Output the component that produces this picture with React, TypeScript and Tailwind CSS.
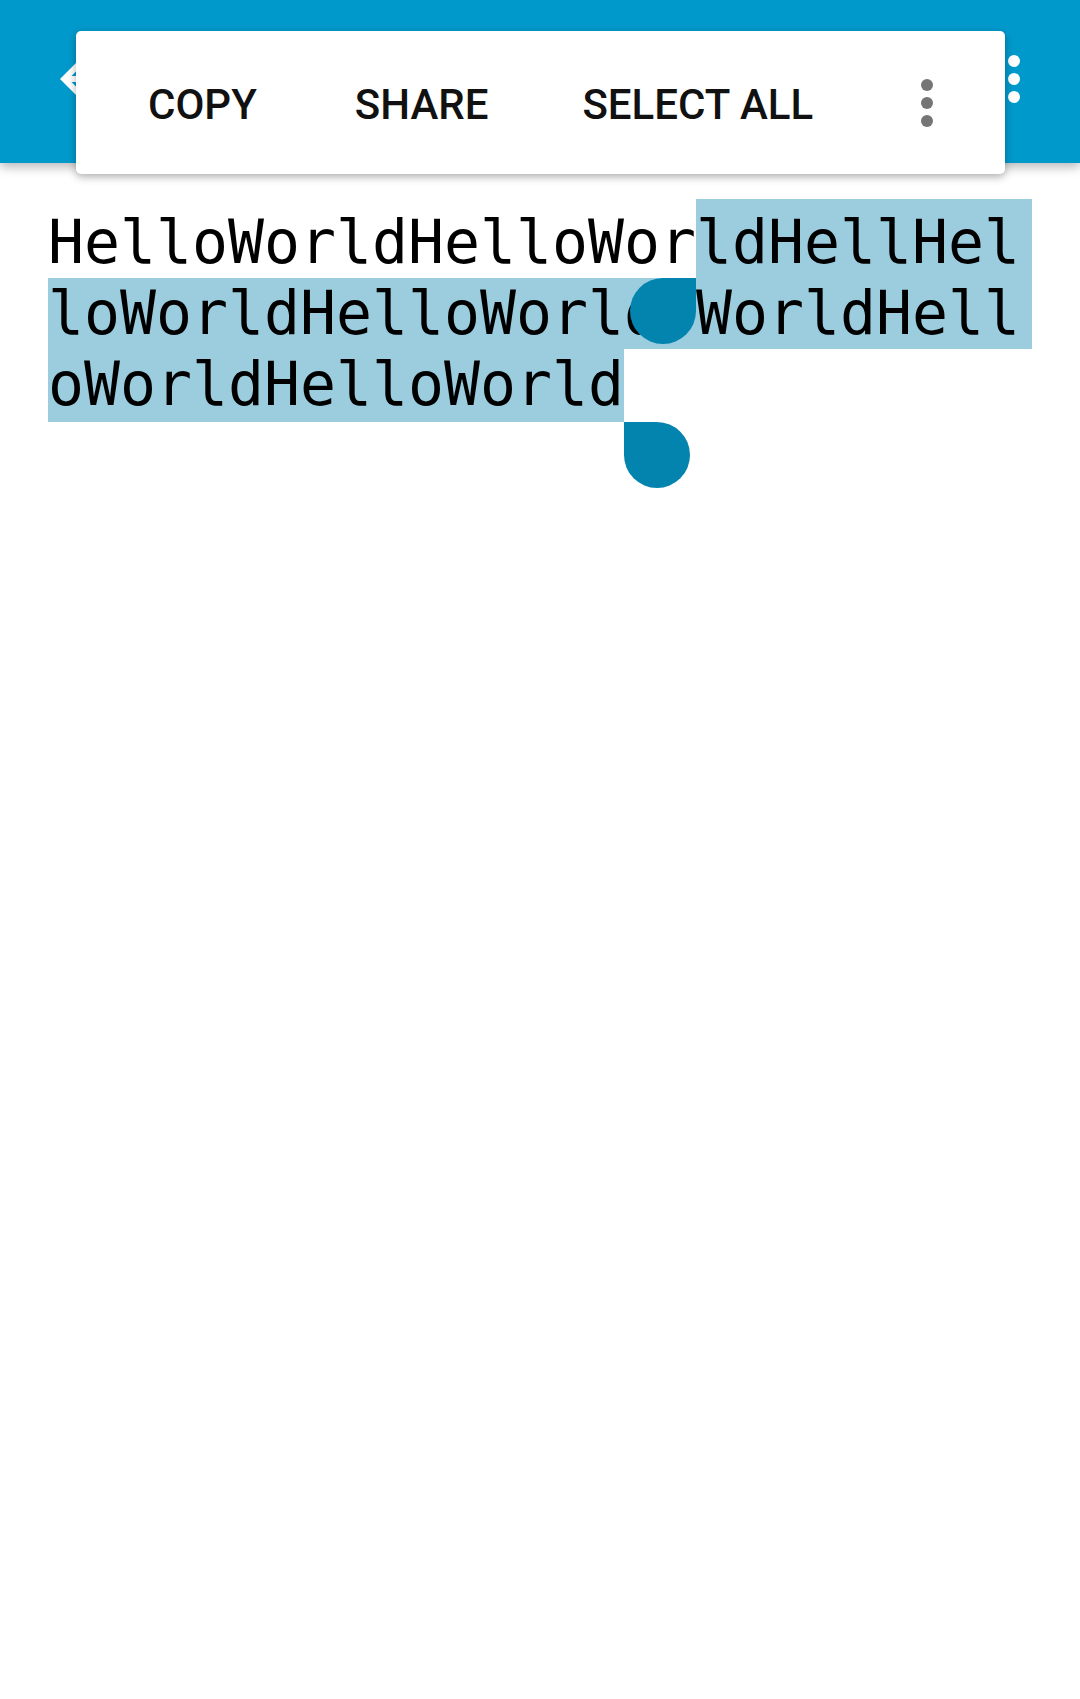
import React from "react";

const MoreVert = ({ color, className }: { color: string; className?: string }) => (
  <svg viewBox="0 0 24 24" className={className} fill={color}>
    <circle cx="12" cy="6" r="2" />
    <circle cx="12" cy="12" r="2" />
    <circle cx="12" cy="18" r="2" />
  </svg>
);

export default function App() {
  return (
    <div className="relative w-[1080px] h-[1699px] bg-white overflow-hidden">
      {/* toolbar */}
      <header className="relative h-[163px] bg-[#0099cc] flex items-start justify-between pl-[48px] pr-[30px] pt-[43px] shadow-[0_4px_10px_rgba(0,0,0,0.28)] z-10">
        <svg viewBox="0 0 24 24" className="w-[72px] h-[72px]" fill="#ffffff">
          <path d="M20 11H7.83l5.59-5.59L12 4l-8 8 8 8 1.41-1.41L7.83 13H20v-2z" />
        </svg>
        <MoreVert color="#ffffff" className="w-[72px] h-[72px]" />
      </header>

      {/* text */}
      <div
        className="mt-[36px] px-[48px] text-[59.8px] text-black"
        style={{ fontFamily: '"DejaVu Sans Mono", monospace' }}
      >
        <div className="flex items-end h-[79px]">
          <span className="leading-[71px] whitespace-pre">HelloWorldHelloWor</span>
          <span className="flex-1 box-border h-[79px] pt-[8px] leading-[71px] bg-[#9bcddf] whitespace-pre">
            ldHellHel
          </span>
        </div>
        <div className="h-[71px] leading-[71px] bg-[#9bcddf] whitespace-pre">
          loWorldHelloWorldoWorldHell
        </div>
        <div className="flex">
          <span className="leading-[71px] pb-[2px] bg-[#9bcddf] whitespace-pre">oWorldHelloWorld</span>
        </div>
      </div>

      {/* selection handles */}
      <div className="absolute left-[630px] top-[278px] w-[66px] h-[66px] bg-[#0284ae] rounded-full rounded-tr-none" />
      <div className="absolute left-[624px] top-[422px] w-[66px] h-[66px] bg-[#0284ae] rounded-full rounded-tl-none" />

      {/* floating text selection toolbar */}
      <div
        className="absolute z-20 left-[76px] top-[31px] w-[929px] h-[143px] bg-white rounded-[5px] shadow-[0_3px_8px_rgba(0,0,0,0.3)] flex items-center pl-[72px] text-[42px] font-medium text-[#111]"
        style={{ fontFamily: 'Roboto, "Noto Sans", sans-serif' }}
      >
        <span className="pt-[3px]">COPY</span>
        <span className="ml-[98px] pt-[3px]">SHARE</span>
        <span className="ml-[94px] pt-[3px]">SELECT ALL</span>
        <MoreVert color="#757575" className="ml-[78px] w-[72px] h-[72px]" />
      </div>
    </div>
  );
}
